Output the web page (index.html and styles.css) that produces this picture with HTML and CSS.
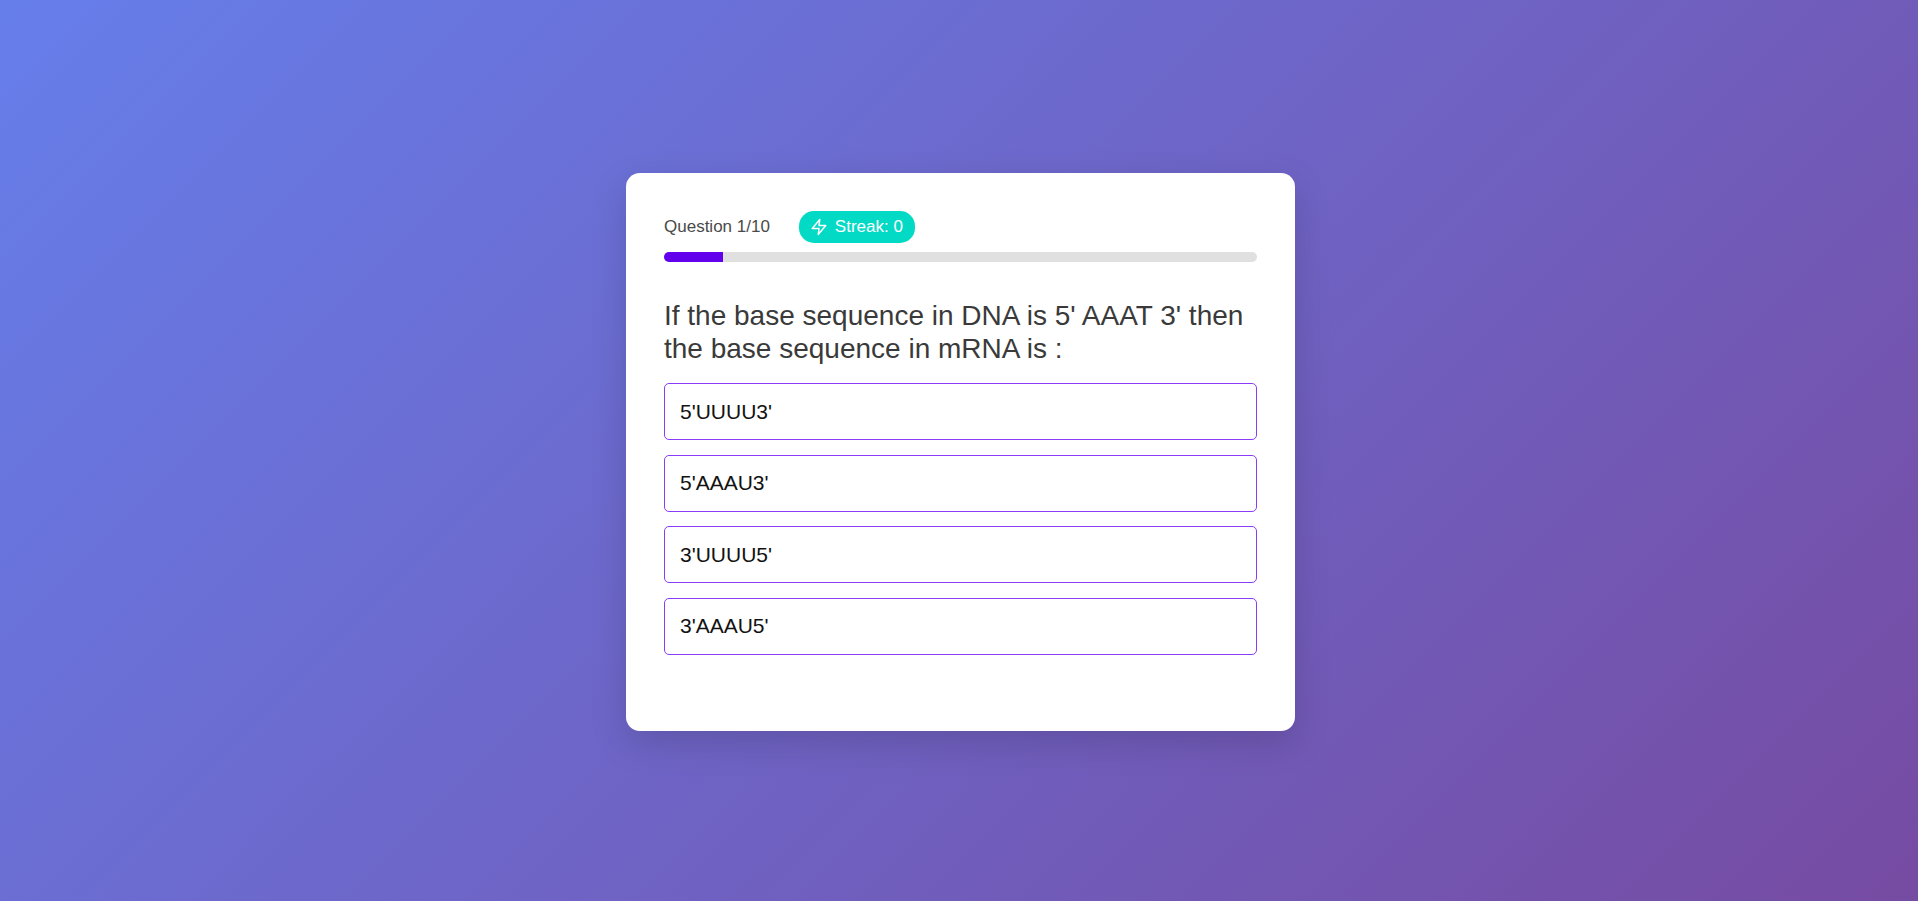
FILE: index.html
```html
<!DOCTYPE html>
<html lang="en">
<head>
<meta charset="utf-8">
<meta name="viewport" content="width=device-width, initial-scale=1">
<title>Quiz</title>
<link rel="stylesheet" href="styles.css">
</head>
<body>
<main class="card">
  <header class="status">
    <span class="counter" id="counter">Question 1/10</span>
    <span class="streak">
      <svg class="bolt" viewBox="0 0 24 24" aria-hidden="true"><path d="M13 2 3 14h9l-1 8 10-12h-9l1-8z"/></svg>
      Streak: 0
    </span>
  </header>
  <div class="progress" role="progressbar" aria-labelledby="counter" aria-valuemin="0" aria-valuemax="10" aria-valuenow="1">
    <div class="progress-fill" style="width: 10%"></div>
  </div>
  <h1 class="question">If the base sequence in DNA is 5' AAAT 3' then the base sequence in mRNA is :</h1>
  <div class="options">
    <button class="option" type="button">5'UUUU3'</button>
    <button class="option" type="button">5'AAAU3'</button>
    <button class="option" type="button">3'UUUU5'</button>
    <button class="option" type="button">3'AAAU5'</button>
  </div>
</main>
</body>
</html>
```
FILE: styles.css
```css
* {
  box-sizing: border-box;
}

body {
  margin: 0;
  min-height: 100vh;
  padding: 3px 0 0 3px;
  display: flex;
  align-items: center;
  justify-content: center;
  font-family: "Liberation Sans", Arial, sans-serif;
  background: linear-gradient(135deg, #667eea 0%, #764ba2 100%);
}

.card {
  width: 100%;
  max-width: 669px;
  padding: 38px 38px 76px;
  border-radius: 14px;
  background: #fff;
  box-shadow: 0 12px 36px rgba(0, 0, 0, 0.15);
}

.status {
  display: flex;
  align-items: center;
  gap: 29px;
  margin-bottom: 9px;
  font-size: 17px;
  line-height: 20px;
}

.counter {
  color: #4a4a4a;
}

.streak {
  display: flex;
  align-items: center;
  gap: 7px;
  padding: 6px 12px 6px 11px;
  border-radius: 15px;
  background: #03dac6;
  color: #fff;
}

.bolt {
  width: 18px;
  height: 18px;
  fill: none;
  stroke: currentColor;
  stroke-width: 2;
  stroke-linecap: round;
  stroke-linejoin: round;
}

.progress {
  height: 10px;
  border-radius: 5px;
  overflow: hidden;
  background: #e0e0e0;
}

.progress-fill {
  height: 100%;
  background: #6200ee;
}

.question {
  margin: 37px 0 18px;
  font-size: 28px;
  font-weight: 400;
  line-height: 33px;
  color: #3a3a3a;
}

.options {
  display: flex;
  flex-direction: column;
  justify-content: space-between;
  min-height: 272px;
}

.option {
  min-height: 57px;
  padding: 0 15px;
  border: 1px solid #8a3cf5;
  border-radius: 5px;
  background: #fff;
  color: #121212;
  font: inherit;
  font-size: 21px;
  text-align: left;
  cursor: pointer;
}
```
